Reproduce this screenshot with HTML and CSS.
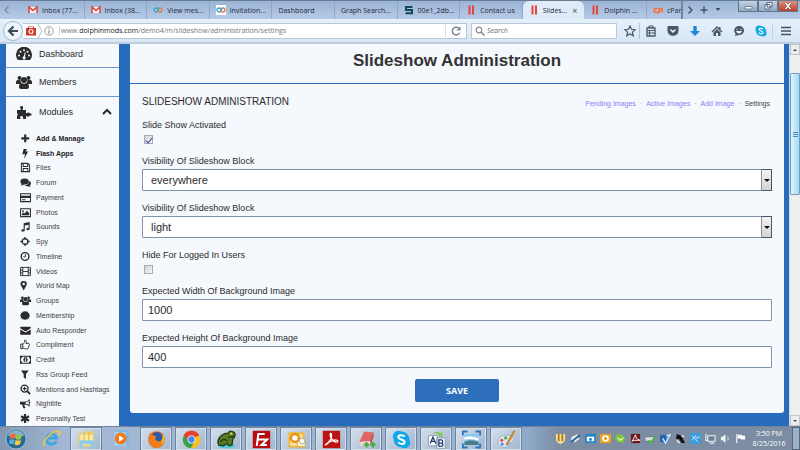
FILE: index.html
```html
<!DOCTYPE html>
<html lang="en">
<head>
<meta charset="utf-8">
<title>Slideshow Administration</title>
<link rel="stylesheet" href="styles.css">
</head>
<body>
<svg class="sprite" aria-hidden="true">
  <symbol id="gmail" viewBox="0 0 10 10"><path d="M1 2h8v6H1z" fill="#f4f0f0"/><path d="M1 8.300V2l4 3.500L9 2v6.300" fill="none" stroke="#d8433b" stroke-width="1.500"/></symbol>
  <symbol id="rings" viewBox="0 0 10 10"><circle cx="3" cy="5" r="2" fill="none" stroke="#3b9fe0" stroke-width="1.300"/><circle cx="7" cy="5" r="2" fill="none" stroke="#e8745c" stroke-width="1.300"/><path d="M3 7c2 0 2-4 4-4" fill="none" stroke="#48b49b" stroke-width="1.300"/></symbol>
  <symbol id="bars" viewBox="0 0 10 10"><path d="M2.500.500h2v9h-2zM6 .500h2v9H6z" fill="#e8403c"/></symbol>
  <symbol id="people" viewBox="0 0 16 14"><circle cx="3.500" cy="3" r="2"/><circle cx="12.500" cy="3" r="2"/><circle cx="8" cy="5" r="3"/><path d="M0 9V7q0-2 2-2h2.500q0 2 1 3Q4 8 3.500 9zM16 9V7q0-2-2-2h-2.500q0 2-1 3 1.500 0 2 1zM3 12c0-3 1-4 2.500-4q2.500 1.500 5 0C12 8 13 9 13 12q0 2-2 2H5q-2 0-2-2z"/></symbol>
  <symbol id="skype" viewBox="0 0 12 12"><circle cx="4" cy="4" r="3.500" fill="#12a8e8"/><circle cx="8" cy="8" r="3.500" fill="#12a8e8"/><circle cx="6" cy="6" r="5" fill="#12a8e8"/><path d="M8 4.200C7 2.900 4 3 4 4.500S8 6 8 7.600 5 9.200 3.900 7.700" fill="none" stroke="#fff" stroke-width="1.200"/></symbol>
</svg>

<header class="tabbar">
  <button class="tool tab-prev" aria-label="Previous tabs"><svg viewBox="0 0 10 10"><path d="M6.500 1.500 3 5l3.500 3.500" fill="none" stroke="#7489a3" stroke-width="1.200"/></svg></button>
  <nav class="tabs" aria-label="Tabs">
    <button class="tab"><svg><use href="#gmail"/></svg><span>Inbox (77...</span></button>
    <button class="tab"><svg><use href="#gmail"/></svg><span>Inbox (38...</span></button>
    <button class="tab"><svg><use href="#rings"/></svg><span>View mes...</span></button>
    <button class="tab"><svg class="on-white"><use href="#rings"/></svg><span>invitation...</span></button>
    <button class="tab"><span>Dashboard</span></button>
    <button class="tab"><span>Graph Search...</span></button>
    <button class="tab"><svg viewBox="0 0 10 10"><path d="M8.500 2H2v3h6v3.300H1.500" fill="none" stroke="#12485c" stroke-width="2"/></svg><span>00e1_2db...</span></button>
    <button class="tab"><svg><use href="#bars"/></svg><span>Contact us</span></button>
    <button class="tab active"><svg><use href="#bars"/></svg><span>Slides...</span><span class="close">×</span></button>
    <button class="tab"><svg><use href="#bars"/></svg><span>Dolphin ...</span></button>
    <button class="tab cut"><svg viewBox="0 0 10 10"><path d="M4.500 3.500H3a1.800 1.800 0 0 0 0 3.700h1.200M5 9l1.300-5.500H8a1.500 1.500 0 0 1 0 3H6.500" fill="none" stroke="#ff6c2c" stroke-width="1.500"/></svg><span>cPan</span></button>
  </nav>
  <div class="tab-tools">
    <button class="tool" aria-label="Next tabs"><svg viewBox="0 0 10 10"><path d="M3.500 1.500 7 5 3.500 8.500" fill="none" stroke="#3f5268" stroke-width="1.400"/></svg></button>
    <button class="tool" aria-label="New tab"><svg viewBox="0 0 10 10"><path d="M5 1.500v7M1.500 5h7" fill="none" stroke="#3f5268" stroke-width="1.400"/></svg></button>
    <button class="tool" aria-label="List all tabs"><svg viewBox="0 0 10 10"><path d="M2.500 3h5L5 6z" fill="#3f5268"/></svg></button>
  </div>
  <div class="win">
    <button aria-label="Minimize"><svg viewBox="0 0 18 10"><path d="M6 5.500h7v2.500H6z" fill="#fff" stroke="#4c5d72" stroke-width=".7"/></svg></button>
    <button aria-label="Restore"><svg viewBox="0 0 18 10"><path d="M8 1.500h5v4.500H8zM6 3.500h5V8H6z" fill="#fff" stroke="#4c5d72" stroke-width=".9"/><path d="M8 5.200h1.200v1H8z" fill="#4c5d72"/></svg></button>
    <button class="win-close" aria-label="Close"><svg viewBox="0 0 18 10"><path d="m6.500 2 5 6m0-6-5 6" stroke="#6b3030" stroke-width="2.600"/><path d="m6.500 2 5 6m0-6-5 6" stroke="#fff" stroke-width="1.600"/></svg></button>
  </div>
</header>

<div class="toolbar">
  <button class="back" aria-label="Back"><svg viewBox="0 0 12 12"><path d="M11 6H2.500M6.500 1.500 2 6l4.500 4.500" fill="none" stroke="#3d4b5a" stroke-width="2.200"/></svg></button>
  <div class="url">
    <svg class="i10" viewBox="0 0 10 10"><path d="M0 2h2V.500h6V2h2v7.500H0z" fill="#d4332a"/><circle cx="5" cy="5.500" r="2" fill="none" stroke="#fff" stroke-width="1.200"/><path d="M3 1.500h4" stroke="#fff"/></svg>
    <svg class="i6" viewBox="0 0 6 14"><path d="m1 0 4 7-4 7" fill="none" stroke="#b4bcc4"/></svg>
    <svg class="i10" viewBox="0 0 10 10"><circle cx="5" cy="5" r="4.300" fill="none" stroke="#85888c" stroke-width=".8"/><path d="M5 4.300V8M5 2.200v1.200" stroke="#777"/></svg>
    <label class="address"><span>www.<b>dolphinmods.com</b>/demo4/m/slideshow/administration/settings</span></label>
    <button class="tool reload" aria-label="Reload"><svg viewBox="0 0 10 10"><path d="M8 6.500A3.200 3.200 0 1 1 7.300 2.700" fill="none" stroke="#73879b" stroke-width="1.200"/><path d="M8.800 1v3.500H5.300z" fill="#73879b"/></svg></button>
  </div>
  <label class="search"><svg class="i10" viewBox="0 0 10 10"><circle cx="4" cy="4" r="2.800" fill="none" stroke="#808890" stroke-width="1.200"/><path d="m6 6 3.500 3.500" stroke="#808890" stroke-width="1.500"/></svg><input type="search" placeholder="Search" aria-label="Search"></label>
  <div class="actions">
    <button class="tool" aria-label="Bookmark"><svg viewBox="0 0 12 12"><path d="m6 1 1.500 3.300 3.700.400-2.800 2.400.900 3.700L6 8.900l-3.300 1.900.900-3.700L.800 4.700l3.700-.400z" fill="none" stroke="#4a5765" stroke-width="1.200"/></svg></button>
    <button class="tool" aria-label="Bookmarks list"><svg viewBox="0 0 12 12"><path d="M2 3h8v8H2z" fill="none" stroke="#4a5765" stroke-width="1.300"/><path d="M4 3V1h4v2M2 5.500h8M2 8h8M4.500 5v6" fill="none" stroke="#4a5765"/></svg></button>
    <button class="tool" aria-label="Pocket"><svg viewBox="0 0 12 12"><path d="M.500 2q0-1 1-1h9q1 0 1 1v3.500c0 7-11 7-11 0z" fill="#4a5765"/><path d="m3.500 4.500 2.500 2.500 2.500-2.500" fill="none" stroke="#fff" stroke-width="1.300"/></svg></button>
    <button class="tool" aria-label="Downloads"><svg viewBox="0 0 12 12"><path d="M4.300 1h3.400v5H11l-5 5-5-5h3.300z" fill="#1d87d2"/></svg></button>
    <button class="tool" aria-label="Home"><svg viewBox="0 0 12 12"><path d="M6 1 .500 6.500l1 1L6 3l4.500 4.500 1-1L9.500 4.500V2H8v1zM2.500 7.500V11h2.500V8h2v3h2.500V7.500L6 4z" fill="#4a5765"/></svg></button>
    <button class="tool" aria-label="Chat"><svg viewBox="0 0 12 12"><path d="M6 1c3 0 5 2 5 4.500S9 10 6 10L2 11l.500-2.500C0 6 1.500 1 6 1z" fill="#4a5765"/><path d="M3.300 4.300h1.400m2.600 0h1.400M3.500 6.500c1 2 4 2 5 0z" fill="#fff" stroke="#fff" stroke-width=".8"/></svg></button>
    <button class="tool" aria-label="Skype"><svg><use href="#skype"/></svg></button>
    <button class="tool" aria-label="Menu"><svg viewBox="0 0 12 12"><path d="M1 2.500h10M1 6h10M1 9.500h10" stroke="#46525f" stroke-width="1.600"/></svg></button>
  </div>
</div>

<div class="page">
  <aside class="sidebar">
    <a class="top" href="#"><svg viewBox="0 0 16 14"><path d="M2 13a8 8 0 1 1 12 0z"/><g fill="#f5f8fd"><circle cx="3" cy="8.500" r="1"/><circle cx="4.500" cy="4.800" r="1"/><circle cx="8" cy="3.200" r="1"/><circle cx="11.500" cy="4.800" r="1"/><circle cx="13" cy="8.500" r="1"/><path d="M8.700 5.500h1l-.700 4a1.600 1.600 0 1 1-1.200-.200z"/></g></svg>Dashboard</a>
    <a class="top" href="#"><svg><use href="#people"/></svg>Members</a>
    <a class="top open" href="#"><svg viewBox="0 0 16 14"><path d="M1 5h4Q3 1 5.500 1T6.500 5H10v3.500q3-2 4 0h1.500v2H14q-1 2-4 .500V14H7q.500-3-1.500-3T4.500 14H1v-3.500q2-1 0-2z"/></svg>Modules<svg class="chev" viewBox="0 0 10 8"><path d="m1 6 4-4 4 4" fill="none" stroke="#2b2b2b" stroke-width="2"/></svg></a>
    <ul class="modules">
      <li><a class="strong" href="#"><svg viewBox="0 0 12 12"><path d="M4.500 1.500h2.400v3.100H10V7H6.900v3.100H4.500V7H1.400V4.600h3.100z"/></svg>Add &amp; Manage</a></li>
      <li><a class="strong" href="#"><svg viewBox="0 0 12 12"><path d="m4 1h3.500L6.300 4 9 3.500 4.500 12 5.500 6.500 2.500 7z"/></svg>Flash Apps</a></li>
      <li><a href="#"><svg viewBox="0 0 12 12"><path d="M1.500 1.500h7l2 2v7h-9zM3.500 1.500V5h5V2M3.500 10.500V7h5v3.500" fill="none" stroke="#2b2b2b" stroke-width="1.100"/></svg>Files</a></li>
      <li><a href="#"><svg viewBox="0 0 12 12"><ellipse cx="5" cy="4.800" rx="4.600" ry="3.300"/><path d="M2 7 1 9.500 5 8zM10 4c3 2 2 4 .700 5l.800 2-3-1c-2 .200-3-.500-3.500-1C8 9 10 7 10 4z"/></svg>Forum</a></li>
      <li><a href="#"><svg viewBox="0 0 12 12"><path d="M.600 2h10.800v8.500H.600z" fill="none" stroke="#2b2b2b" stroke-width="1.100"/><path d="M.500 4h11v2.500H.500zM2 8h4v1H2z"/></svg>Payment</a></li>
      <li><a href="#"><svg viewBox="0 0 12 12"><path d="M.600 2h10.800v8.500H.600z" fill="none" stroke="#2b2b2b" stroke-width="1.100"/><circle cx="3.200" cy="4.500" r="1"/><path d="M2 9V7.500l1.500-1.500 1.500 1L7.500 4 10 6.500V9z"/></svg>Photos</a></li>
      <li><a href="#"><svg viewBox="0 0 12 12"><path d="M4 2.500 10.500 1v7.500c0 2-3.500 2-3.500.400 0-1 1.200-1.500 2.300-1.200V4L5.200 5v5c0 2-3.700 2-3.700.500C1.500 9.200 3 8.800 4 9z"/></svg>Sounds</a></li>
      <li><a href="#"><svg viewBox="0 0 12 12"><circle cx="5.500" cy="6" r="3.200" fill="none" stroke="#2b2b2b" stroke-width="1.300"/><path d="M4.800 1h1.400v3H4.800zM4.800 8h1.400v3H4.800zM.500 5.300h3v1.400h-3zM7.500 5.300h3v1.400h-3z"/></svg>Spy</a></li>
      <li><a href="#"><svg viewBox="0 0 12 12"><circle cx="5.500" cy="6" r="4.200" fill="none" stroke="#2b2b2b" stroke-width="1.500"/><path d="M5.800 3.500v3H3.500" fill="none" stroke="#2b2b2b"/></svg>Timeline</a></li>
      <li><a href="#"><svg viewBox="0 0 12 12"><path d="M.600 1.500h10.800v9H.600zM3 1.500v9M9 1.500v9M3 6h6M.600 4.500H3M.600 7.500H3M9 4.500h2.400M9 7.500h2.400" fill="none" stroke="#2b2b2b"/></svg>Videos</a></li>
      <li><a href="#"><svg viewBox="0 0 12 12"><path fill-rule="evenodd" d="M4 1c4 0 4 3.500 2.600 5.500L4 11.500 1.400 6.500C0 4.500 0 1 4 1zm0 2a1.400 1.400 0 1 0 0 2.800A1.400 1.400 0 0 0 4 3z"/></svg>World Map</a></li>
      <li><a href="#"><svg><use href="#people"/></svg>Groups</a></li>
      <li><a href="#"><svg viewBox="0 0 12 12"><path d="m5.500 1 1.200.900 1.400-.300.600 1.300 1.400.600-.200 1.400L11 6l-1 1.100.100 1.500-1.400.600-.700 1.200-1.400-.200-1.100.800-1.200-.800-1.400.200-.600-1.200-1.400-.600.200-1.500L0 6l1-1.100-.100-1.400 1.400-.600.600-1.300 1.400.300z"/></svg>Membership</a></li>
      <li><a href="#"><svg viewBox="0 0 12 12"><path d="M.300 2h11.400v1.500L6 7 .300 3.500zM.300 4.800 6 8.300l5.700-3.500v5.700H.300z"/></svg>Auto Responder</a></li>
      <li><a href="#"><svg viewBox="0 0 12 12"><path d="M.800 5.500H3v5H.800zM3 5.500c2-.500 2-2.500 2.200-4.300 2.300 0 1.800 2.500 1.300 3.600h3c1.500.5.600 1.500.400 2 .300 1-.200 1.200-.500 1.800 0 2-1 2.200-2.400 2.200C5 10.800 4.500 10 3 10" fill="none" stroke="#2b2b2b"/></svg>Compliment</a></li>
      <li><a href="#"><svg viewBox="0 0 12 12"><path fill-rule="evenodd" d="M0 2h12v8.500H0zm2.500 1Q2.300 4.500 1 4.800v3q1.300.200 1.500 1.700h7q.200-1.500 1.500-1.700v-3Q9.700 4.500 9.500 3z"/><ellipse cx="6" cy="6.200" rx="2.300" ry="2.800"/><path d="M6 4.500v3.500M5 8h2" stroke="#f5f8fd" stroke-width=".9"/></svg>Credit</a></li>
      <li><a href="#"><svg viewBox="0 0 12 12"><path d="M1 1.500h8.500L6.500 5.500V11L4 9V5.500z"/></svg>Rss Group Feed</a></li>
      <li><a href="#"><svg viewBox="0 0 12 12"><circle cx="5" cy="5" r="3.800" fill="none" stroke="#2b2b2b" stroke-width="1.500"/><path d="m7.800 7.800 3.200 3.200" stroke="#2b2b2b" stroke-width="2"/><path d="M5 3v4M3 5h4" stroke="#2b2b2b" stroke-width="1.200"/></svg>Mentions and Hashtags</a></li>
      <li><a href="#"><svg viewBox="0 0 12 12"><path fill-rule="evenodd" d="M0 4h5q3 0 5.500-3v3q1.500.700 0 2v3.500Q8 7 5 7q-1 1 1 3.500-1 1-2.500.300L2.500 7H0zm6 .800v1.500q2 .200 3.500 1.200V3Q8 4.500 6 4.800z"/></svg>Nightlife</a></li>
      <li><a href="#"><svg viewBox="0 0 12 12"><path d="M5.500 1v10M1.200 3.500l8.600 5M9.800 3.500l-8.600 5" stroke="#2b2b2b" stroke-width="2.400"/></svg>Personality Test</a></li>
    </ul>
  </aside>

  <main class="main">
    <h1>Slideshow Administration</h1>
    <section class="card">
      <div class="card-head">
        <h2>SLIDESHOW ADMINISTRATION</h2>
        <nav class="links"><a href="#">Pending Images</a><i>·</i><a href="#">Active Images</a><i>·</i><a href="#">Add Image</a><i>·</i><span>Settings</span></nav>
      </div>
      <form class="form">
        <div class="field check"><label for="act">Slide Show Activated</label><input id="act" type="checkbox" checked></div>
        <div class="field"><label for="vis1">Visibility Of Slideshow Block</label><div class="select"><select id="vis1"><option>everywhere</option></select><span class="arrow"></span></div></div>
        <div class="field"><label for="vis2">Visibility Of Slideshow Block</label><div class="select"><select id="vis2"><option>light</option></select><span class="arrow"></span></div></div>
        <div class="field check"><label for="hide">Hide For Logged In Users</label><input id="hide" type="checkbox"></div>
        <div class="field"><label for="w">Expected Width Of Background Image</label><input id="w" type="text" value="1000"></div>
        <div class="field"><label for="h">Expected Height Of Background Image</label><input id="h" type="text" value="400"></div>
        <button class="save" type="button">SAVE</button>
      </form>
    </section>
  </main>

  <div class="scroll" aria-hidden="true"><span class="sbtn up"></span><span class="thumb"></span><span class="sbtn down"></span></div>
</div>

<footer class="taskbar">
  <button class="task start" aria-label="Start"><svg viewBox="0 0 24 24"><circle cx="12" cy="12" r="11" fill="#2c6796" stroke="#9cc5e0"/><path d="M3 8a10 10 0 0 1 18 0q-9 5-18 0z" fill="#86b2d0"/><path d="M6 7q3-2 5.500-.500L10.500 12Q8 10.500 5 12z" fill="#ee6a2e"/><path d="M12.500 7q3 1.500 6-.500L17.500 12q-3 1.500-6 0z" fill="#92c83e"/><path d="M5 13q3-1.500 5.500 0L9.500 18q-2.500-1.500-5 0z" fill="#4ab2ec"/><path d="M11.500 13q3 1.500 6 0L16 18q-3 1.500-5.500 0z" fill="#fbcf3a"/></svg></button>
  <button class="task" aria-label="Internet Explorer"><svg viewBox="0 0 24 24"><path d="M18 15.500A6.500 6.500 0 1 1 18.500 11.500H6" fill="none" stroke="#38a7e6" stroke-width="3.600"/><path d="M3 21C-2 17 13 2 21 3c3 1 1 4 0 5" fill="none" stroke="#f1c643" stroke-width="2"/></svg></button>
  <button class="task run" aria-label="Explorer"><svg viewBox="0 0 24 24"><path d="M2 4h7l1-2h11v19H2z" fill="#f0cd6c"/><path d="M4 6h16v13H4z" fill="#fbe9a4"/><path d="M9 3v12M15 3v12" stroke="#d9ab42"/><path d="M3 23v-7q0-3 2-3h14q2 0 2 3v7h-4v-5H7v5z" fill="#8ecaea"/></svg></button>
  <button class="task" aria-label="Media Player"><svg viewBox="0 0 24 24"><path d="M4 2h16l2 18-17 2z" fill="#78b8e4"/><path d="M3 4h15v17H3z" fill="#a5d3f1"/><circle cx="11" cy="12" r="7.500" fill="#f27a1a"/><path d="m9 8 6 4-6 4z" fill="#fff"/></svg></button>
  <button class="task run" aria-label="Firefox"><svg viewBox="0 0 24 24"><circle cx="12" cy="12" r="10.500" fill="#e66a1c"/><circle cx="12.500" cy="9.500" r="7" fill="#2b5ca8"/><path d="M2 8l2-5 4 4 4 1-2 3 3 3c3 1 6-1 7-5q4 7-2 12c-8 5-18-1-16-13z" fill="#ed7d1d"/><path d="M20 5q4 8-2 14 2-6 2-14z" fill="#fbc63a"/></svg></button>
  <button class="task run" aria-label="Chrome"><svg viewBox="0 0 24 24"><circle cx="12" cy="12" r="11" fill="#fbc116"/><path d="M12 12 2.500 6.500A11 11 0 0 1 21.500 6.500z" fill="#e34133"/><path d="M12 7h9.800A11 11 0 0 0 2.500 6.500L8 14z" fill="#e34133"/><path d="M2.500 6.500A11 11 0 0 0 11 23l5-8.500-8-1z" fill="#36a152"/><circle cx="12" cy="12" r="5" fill="#fff"/><circle cx="12" cy="12" r="4" fill="#4285f4"/></svg></button>
  <button class="task run" aria-label="Frog"><svg viewBox="0 0 24 24"><ellipse cx="12" cy="20" rx="11" ry="3.500" fill="#52c9d8"/><path d="M1 15C2 7 9 4 14 4q2-4 5-2c5 0 5 7 1 9l-1 8-4 1-2-3-5 3-6-1z" fill="#567a25" stroke="#1d3510" stroke-width="1.500"/><path d="M4 15q5-6 9-1M14 9l8-1" fill="none" stroke="#213c10" stroke-width="1.500"/><circle cx="18" cy="4.500" r="1.500" fill="#e7d748"/></svg></button>
  <button class="task run" aria-label="FileZilla"><svg viewBox="0 0 24 24"><path d="M1 1h22v22H1z" fill="#b70d10"/><path d="M6 20 8 5h8M7 12h7M13 12h6l-7 7h7" fill="none" stroke="#fff" stroke-width="2.600"/></svg></button>
  <button class="task run" aria-label="Outlook"><svg viewBox="0 0 24 24"><path d="M2 3h20v19H2z" fill="#f4b52d"/><path d="M4 5h16v15H4z" fill="#fbe29a"/><circle cx="10" cy="10" r="5" fill="#fff" stroke="#e79112" stroke-width="3"/><path d="M13 14h10v7H13z" fill="#fff4cf" stroke="#d7992c"/><circle cx="19" cy="14" r="3.500" fill="#fff" stroke="#a5a085"/></svg></button>
  <button class="task run" aria-label="Acrobat"><svg viewBox="0 0 24 24"><path d="M1 1h22v22H1z" fill="#be1411"/><path d="M4 19c5-2 9-10 8-14-2-3-3 3 1 7 3 4 7 4 7 2 0-3-10-1-15 4z" fill="none" stroke="#fff" stroke-width="1.600"/></svg></button>
  <button class="task run" aria-label="Eraser"><svg viewBox="0 0 24 24"><path d="m9 2 12 1-4 11-14 1z" fill="#df6664"/><path d="m3 15 14-1v5L4 20z" fill="#f2d5d0"/><path d="m17 14 4-11v5l-4 11z" fill="#b83a3c"/><path d="M12 15v7M8.500 18.500h7M20 15v7M16.500 18.500h7" stroke="#43a52c" stroke-width="2.400"/></svg></button>
  <button class="task run" aria-label="Skype"><svg><use href="#skype"/></svg></button>
  <button class="task run" aria-label="Text converter"><svg viewBox="0 0 24 24"><path d="M2 7h11v13H2zM12 10h11v13H12z" fill="#fff" stroke="#7d8da6"/><path d="m4 17 3.500-8 3.500 8M5 14.500h5M15 12.500v8h3c3 0 3-4 0-4h-3 3c2.500 0 2.500-4 0-4z" fill="none" stroke="#203a76" stroke-width="1.600"/><path d="M7 5q5-5 10-1l2-2 1 7-6-1 1-2Q11 3 7 5z" fill="#86c456"/></svg></button>
  <button class="task run" aria-label="Pictures"><svg viewBox="0 0 24 24"><path d="M3 5h18v14H3z" fill="#8fc8ed"/><path d="M3 15q8-4 18 0v4H3z" fill="#447f8b"/><path d="M3 11q8-3 18 1" fill="none" stroke="#fff" stroke-width="3"/><path d="M1 7V2h6M17 2h6v5M23 17v5h-6M7 22H1v-5" fill="none" stroke="#2876bc" stroke-width="2.500"/></svg></button>
  <button class="task run" aria-label="Paint"><svg viewBox="0 0 24 24"><path d="M1 15C1 8 9 5 16 7s7 8 1 9c-4 0-2 5-6 6-6 1-10-3-10-7z" fill="#d7e4f2" stroke="#8fa7c3"/><circle cx="6" cy="13" r="2" fill="#e3543e"/><circle cx="11" cy="10" r="2" fill="#4cac4c"/><circle cx="6.500" cy="18" r="1.800" fill="#3f88dd"/><circle cx="17" cy="11" r="1.800" fill="#f2c332"/><path d="M22 1 12 19" stroke="#cc812f" stroke-width="2.600"/></svg></button>
  <div class="status">
    <div class="tray">
      <svg viewBox="0 0 12 12"><path d="M1 1h10v6q0 3-5 5-5-2-5-5z" fill="#f4e19a"/><path d="M3 1h2v8H3zM7 1h2v8H7z" fill="#b17b1c"/></svg>
      <svg viewBox="0 0 12 12"><path d="m2 4 7-3-1 4 3 1-7 5 1-4-4 1z" fill="#e9eff6"/><path d="m1 10 10-8" stroke="#2a699a" stroke-width="2"/></svg>
      <svg viewBox="0 0 12 12"><path d="M0 1h12v10H0z" fill="#2686c4"/><path d="M2 4h8v5H2z" fill="#fff"/><circle cx="6" cy="7" r="1.600" fill="#2686c4"/></svg>
      <svg viewBox="0 0 12 12"><path d="M0 1h12v10H0z" fill="#eda224"/><circle cx="6" cy="6" r="2.700" fill="none" stroke="#fff" stroke-width="1.800"/></svg>
      <svg viewBox="0 0 12 12"><path d="m2 1 6 1 3 4-2 5-5-1-4-3z" fill="#7fc43a"/><path d="m3 5 3 3 3-3" fill="none" stroke="#e3f7c9" stroke-width="1.400"/></svg>
      <svg viewBox="0 0 12 12"><path d="M1 1h10v10H1z" fill="#701516"/><path d="M2 10 6 2l1 4 4 2-8 0" fill="none" stroke="#fff"/></svg>
      <svg viewBox="0 0 12 12"><path d="M0 4h10v5H0z" fill="#d7dde3" stroke="#66707c"/><path d="m4 8 2 3 5-7" fill="none" stroke="#4bb847" stroke-width="2"/></svg>
      <svg viewBox="0 0 12 12"><path d="M0 2h7v8H0z" fill="#2462b4"/><path d="m3 6 3 5 5-9-4 1" fill="none" stroke="#c4e2ff" stroke-width="1.600"/></svg>
      <svg viewBox="0 0 12 12"><path d="m2 1 5 2 4 8H7L5 7 1 6z" fill="#111"/><path d="m2 8 3 3M7 3l3 1" stroke="#fff" stroke-width="1.400"/></svg>
      <svg viewBox="0 0 12 12"><path d="M0 0h12v12H0z" fill="#3b9bdf"/><path d="m2 8 4-5 1 3 4-2M2 3l7 7" fill="none" stroke="#c5eaff"/></svg>
      <svg viewBox="0 0 12 12"><path d="M3 3h8v6H3zM5 11h5M1 1v7h2" fill="#6d7f94" stroke="#eef3f8" stroke-width="1.200"/></svg>
      <svg viewBox="0 0 12 12"><path d="M1 4h2l3-3v10L3 8H1z" fill="#eef3f8"/><path d="M8.500 4q1 2 0 4" fill="none" stroke="#eef3f8"/></svg>
      <svg viewBox="0 0 12 12"><path d="M2 1v10" stroke="#fff" stroke-width="1.200"/><path d="M3 2h4l1 1h3v4H7L6 6H3z" fill="#fff"/></svg>
    </div>
    <time class="clock"><span>3:50 PM</span><span>8/25/2016</span></time>
    <button class="peek" aria-label="Show desktop"></button>
  </div>
</footer>
</body>
</html>
```

FILE: styles.css
```css
* { box-sizing: border-box; }

:root {
  --blue: #276bbd;
  --panel: #f5f8fd;
  --ui: "Open Sans", "Noto Sans", sans-serif;
}

body {
  margin: 0;
  height: 100vh;
  display: flex;
  flex-direction: column;
  overflow: hidden;
  background: var(--blue);
  color: #2b2b2b;
  font-family: "Liberation Sans", Arial, sans-serif;
  font-size: 9px;
}

button { font: inherit; color: inherit; border: 0; padding: 0; background: none; }
a { color: inherit; text-decoration: none; }
svg { flex: none; display: block; }
.sprite { position: absolute; width: 0; height: 0; }
.i10 { width: 10px; height: 10px; }
.i6 { width: 6px; height: 14px; }

/* Browser tabs */
.tabbar {
  flex: none;
  height: 19px;
  display: flex;
  border-top: 1px solid #6a7c91;
  background: linear-gradient(#9ab4d5, #b5cae6);
  font-family: var(--ui);
  font-size: 7px;
  color: #1f2a38;
}
.tool { display: flex; align-items: center; justify-content: center; }
.tool svg { width: 12px; height: 12px; }
.tabbar .tool svg { width: 10px; height: 10px; }
.tab-prev { width: 14px; margin-right: 8px; }
.tabs { flex: 1; min-width: 0; display: flex; overflow: hidden; }
.tab {
  flex: 1;
  min-width: 0;
  display: flex;
  align-items: center;
  gap: 4px;
  padding: 0 0 0 6px;
  border-right: 1px solid #8ea8c7;
  white-space: nowrap;
  overflow: hidden;
}
.tab svg { width: 10px; height: 10px; }
.tab.active { background: #dfebf8; border-radius: 6px 6px 0 0; border-right: 0; }
.tab.cut { flex: 0 0 36px; border-right: 2px solid #71849b; }
.close { margin-left: auto; padding-right: 7px; font-size: 9px; font-weight: bold; color: #6a7683; }
.on-white { background: #fff; }
.tab-tools { display: flex; }
.tab-tools .tool { width: 14px; }
.win { display: flex; align-items: flex-start; padding: 0 2px 0 13px; }
.win button {
  width: 20px;
  height: 11px;
  border: 1px solid #63758c;
  border-top: 0;
  background: linear-gradient(#c4d3e5, #91a8c3);
}
.win svg { width: 18px; height: 10px; }
.win .win-close { background: linear-gradient(#dc9480, #bd3e26); }

/* Address bar */
.toolbar {
  flex: none;
  height: 25px;
  display: flex;
  align-items: center;
  padding: 0 2px 0 3px;
  background: linear-gradient(#e6f0fb, #d8e6f5);
  border-bottom: 2px solid #bccde0;
  font-family: var(--ui);
  font-size: 7px;
}
.back {
  width: 20px;
  height: 20px;
  border: 1px solid #a5b6c8;
  border-radius: 50%;
  background: #eef5fc;
  display: flex;
  align-items: center;
  justify-content: center;
}
.back svg { width: 12px; height: 12px; }
.url, .search {
  height: 16px;
  display: flex;
  align-items: center;
  background: #fff;
  border: 1px solid #b9c8d8;
}
.url { flex: 446; min-width: 0; gap: 1px; border-left: 0; padding-left: 3px; }
.address { flex: 1; min-width: 0; margin-left: 4px; padding-left: 1px; border-left: 1px solid #d0d6dc; color: #75797e; white-space: nowrap; overflow: hidden; }
.address b { font-weight: normal; color: #15191d; }
.reload { width: 21px; height: 12px; border-left: 1px solid #d5dde5; }
.search { flex: 143; min-width: 0; margin-left: 4px; padding-left: 3px; gap: 2px; }
.search input { flex: 1; min-width: 0; border: 0; padding: 0; background: none; font: italic 7px var(--ui); }
.search input::placeholder { color: #666a70; opacity: 1; }
.actions { flex: none; display: flex; margin-left: 3px; }
.actions .tool { width: 22px; height: 16px; }
.actions .tool:first-child { width: 20px; border-right: 1px solid #b4c2d0; }
.actions .tool:last-child { width: 26px; border-left: 1px solid #c4d2e0; }

/* Page */
.page { flex: 1; min-height: 0; display: flex; padding-left: 6px; overflow: hidden; }
.sidebar { flex: none; width: 113px; display: flex; flex-direction: column; background: var(--panel); }
.top {
  flex: none;
  height: 29px;
  display: flex;
  align-items: center;
  gap: 7px;
  padding: 0 7px 0 10px;
  border-bottom: 1px solid #6c9cd6;
}
.top:first-child { height: 24px; padding-bottom: 4px; }
.top svg { width: 16px; height: 14px; fill: #2b2b2b; }
.top.open { border-bottom: 0; }
.top svg.chev { width: 10px; height: 8px; margin-left: auto; }
.modules {
  flex: 1;
  margin: 0;
  padding: 5px 0 0;
  list-style: none;
  display: grid;
  grid-auto-rows: 1fr;
  align-items: center;
  font-size: 7px;
  color: #3f3f3f;
}
.modules a { display: flex; align-items: center; gap: 5px; padding-left: 14px; white-space: nowrap; }
.modules svg { width: 11px; height: 11px; fill: #2b2b2b; }
.modules .strong { font-weight: bold; color: #222; }

.main { flex: 1; min-width: 0; margin: 0 5px 0 11px; }
h1, h2 { margin: 0; }
h1 {
  height: 40px;
  padding-bottom: 5px;
  display: flex;
  align-items: center;
  justify-content: center;
  background: var(--panel);
  border-bottom: 1px solid #2b6fb8;
  font-size: 17px;
  color: #333;
}
.card { padding: 10px 12px 11px; background: var(--panel); border-radius: 0 0 3px 3px; }
.card-head { display: flex; align-items: center; justify-content: space-between; line-height: 14px; margin-bottom: 10px; }
h2 { padding-top: 1px; font-size: 10px; font-weight: normal; }
.links { display: flex; gap: 4px; padding: 4px 2px 0 0; line-height: 10px; font-size: 7px; color: #444; }
.links a { color: #8f7cf5; }
.links i { color: #999; font-style: normal; }
.form { display: flex; flex-direction: column; gap: 11px; }
.field { display: flex; flex-direction: column; gap: 2px; }
.field label { line-height: 12px; }
.field.check { height: 25px; gap: 4px; }
.field input[type="text"], select {
  width: 100%;
  height: 22px;
  border: 1px solid #8093a8;
  border-radius: 1px;
  background: #fff;
  color: #2b2b2b;
  font: 11px "Liberation Sans", Arial, sans-serif;
  padding: 0 5px;
}
select { appearance: none; display: block; padding: 0 20px 0 8px; }
.select { position: relative; }
.arrow {
  position: absolute;
  top: 0;
  right: 0;
  width: 11px;
  height: 22px;
  border: 1px solid #4d5661;
  border-left-color: #909090;
  background: linear-gradient(#f3f3f3, #d3d3d3);
  pointer-events: none;
}
.arrow::after {
  content: "";
  position: absolute;
  left: 2px;
  top: 9px;
  border: 3px solid transparent;
  border-top-color: #111;
  border-bottom: 0;
}
input[type="checkbox"] {
  appearance: none;
  width: 9px;
  height: 9px;
  margin: 0 0 0 2px;
  border: 1px solid #a9adb3;
  background: linear-gradient(135deg, #d2d6da, #f3f4f5);
}
input[type="checkbox"]:checked::after {
  content: "";
  display: block;
  width: 3px;
  height: 6px;
  margin-left: 2px;
  border: solid #39469a;
  border-width: 0 1px 1px 0;
  transform: rotate(40deg);
}
.save {
  align-self: center;
  width: 84px;
  height: 23px;
  border-radius: 2px;
  background: #2d6fba;
  color: #fff;
  font: bold 9px "Open Sans", sans-serif;
}

/* Scroll bar */
.scroll { flex: none; width: 11px; display: flex; flex-direction: column; background: #efeff0; border-left: 1px solid #d5d8dd; }
.sbtn { height: 11px; display: flex; align-items: center; justify-content: center; border: 1px solid #c3c5c9; background: #ececee; }
.sbtn::after { content: ""; border: 2px solid transparent; }
.up::after { border-bottom-color: #444; border-top: 0; }
.down { margin-top: auto; }
.down::after { border-top-color: #444; border-bottom: 0; }
.thumb {
  height: 32%;
  margin-top: 18px;
  border: 1px solid #6f9fc4;
  border-radius: 1px;
  background: linear-gradient(#3f8fc0, #3f8fc0) center calc(50% - 2px) / 5px 1px no-repeat,
    linear-gradient(#3f8fc0, #3f8fc0) center / 5px 1px no-repeat,
    linear-gradient(#3f8fc0, #3f8fc0) center calc(50% + 2px) / 5px 1px no-repeat,
    linear-gradient(90deg, #dff3fc, #a6dbf4);
}

/* Taskbar */
.taskbar {
  flex: none;
  height: 24px;
  display: flex;
  align-items: center;
  gap: 3px;
  border-top: 1px solid #70839b;
  background: linear-gradient(90deg, #8297b1, #a2b8d4 8%, #9bb4d2 60%, #8ea9c9 66%, #7b8ca3 70%, #7b8ca3);
}
.task { flex: none; width: 32px; height: 23px; display: flex; align-items: center; justify-content: center; border: 1px solid transparent; }
.task svg { width: 19px; height: 19px; }
.start svg { width: 22px; height: 22px; }
.task.run { border-color: #6e849f; border-bottom: 0; box-shadow: inset 0 0 0 1px #d2dfed; background: linear-gradient(135deg, #d5e0ec, #a0b5cf); }
.status { display: flex; align-items: center; margin-left: auto; }
.tray { display: flex; gap: 4px; }
.tray svg { width: 11px; height: 11px; }
.clock {
  flex: none;
  width: 46px;
  display: flex;
  flex-direction: column;
  align-items: center;
  font: 7px/10px var(--ui);
  color: #fff;
}
.peek { flex: none; width: 8px; height: 23px; border: 1px solid #56687f; background: #9eb0c5; }
```
